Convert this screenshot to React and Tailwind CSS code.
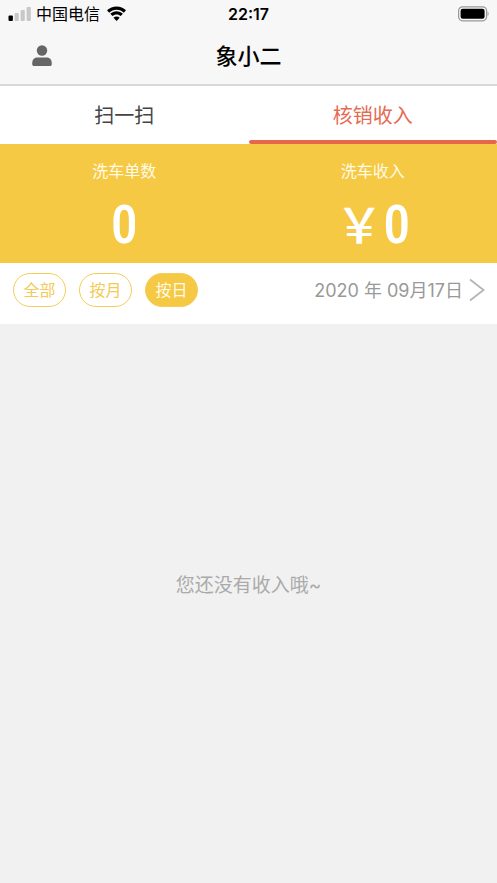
import React, { useState } from "react";
import clsx from "clsx";

const TABS = [
  { id: "scan", label: "扫一扫" },
  { id: "income", label: "核销收入" }
];

const STATS = [
  { label: "洗车单数", value: "0" },
  { label: "洗车收入", value: "0", currency: "￥" }
];

const RANGES = ["全部", "按月", "按日"];

function StatusBar() {
  return (
    <div className="grid h-7 grid-cols-3 items-center pl-2 pr-2 text-black">
      <div className="flex items-center gap-1">
        <svg className="h-4 w-6" viewBox="0 0 24 16" aria-hidden="true">
          <rect x="0.5" y="9.5" width="4.4" height="5.5" rx="1" fill="#000" />
          <rect x="6.6" y="7" width="4.2" height="8" rx="1" fill="#c8c8c8" />
          <rect x="12.6" y="4" width="4.2" height="11" rx="1" fill="#c8c8c8" />
          <rect x="18.6" y="1" width="4.2" height="14" rx="1" fill="#c8c8c8" />
        </svg>
        <span className="whitespace-nowrap text-base leading-7">中国电信</span>
        <svg className="ml-0.5 h-4 w-5 shrink-0" viewBox="0 0 20 16" aria-hidden="true">
          <path d="M10.6 0.5C7 0.5 3.6 1.9 1 4.3L3.2 6.7C5.2 4.8 7.8 3.8 10.6 3.8S16 4.8 17.8 6.7L20 4.3C17.6 1.9 14.2 0.5 10.6 0.5Z" />
          <path d="M10.6 5.3C8.2 5.3 6 6.2 4.3 7.7L6.5 10.1C7.6 9.1 9 8.5 10.6 8.5S13.6 9.1 14.7 10.1L16.9 7.7C15.2 6.2 13 5.3 10.6 5.3Z" />
          <path d="M10.6 15L7.5 11.7C9.3 10.1 11.9 10.1 13.7 11.7Z" />
        </svg>
      </div>
      <span className="text-center text-base font-semibold leading-7">22:17</span>
      <svg className="h-4 w-8 justify-self-end" viewBox="0 0 32 16" aria-hidden="true">
        <rect x="1.6" y="0.8" width="28" height="14" rx="4" fill="none" stroke="#999" strokeWidth="1.2" />
        <rect x="3.6" y="2.8" width="24" height="10" rx="2.2" fill="#000" />
        <path d="M30.6 5.5v4.6c1.4-.8 1.4-3.8 0-4.6z" fill="#999" />
      </svg>
    </div>
  );
}

function NavBar() {
  return (
    <div className="grid h-14 grid-cols-3 items-center">
      <button type="button" aria-label="个人中心" className="ml-8 w-5">
        <svg className="h-6 w-5" viewBox="0 0 20 24" fill="#666" aria-hidden="true">
          <circle cx="10" cy="6.5" r="5.2" />
          <path d="M0.2 19.4C0.2 15.6 2 13.4 5.2 13.4H14.8C18 13.4 19.8 15.6 19.8 19.4C19.8 21.2 19.2 22 17.6 22H2.4C0.8 22 0.2 21.2 0.2 19.4Z" />
        </svg>
      </button>
      <h1 className="text-center text-[22px] font-medium leading-8 text-black">象小二</h1>
    </div>
  );
}

export default function App() {
  const [tab, setTab] = useState("income");
  const [range, setRange] = useState("按日");

  return (
    <div className="flex min-h-screen flex-col bg-[#f1f1f1] font-['Inter','Noto_Sans_CJK_SC',sans-serif]">
      <header className="border-b-2 border-[#d8d8d8] bg-[#f7f7f7]">
        <StatusBar />
        <NavBar />
      </header>

      {/* Tabs */}
      <nav className="grid grid-cols-2 bg-white">
        {TABS.map((item) => (
          <button
            key={item.id}
            type="button"
            onClick={() => setTab(item.id)}
            className="flex h-[58px] flex-col text-xl"
          >
            <span
              className={clsx(
                "flex w-full flex-1 items-center justify-center pt-1.5",
                tab === item.id ? "text-[#e56a52]" : "text-[#444]"
              )}
            >
              {item.label}
            </span>
            <span className={clsx("h-1 w-full rounded-full", tab === item.id && "bg-[#e5664a]")} />
          </button>
        ))}
      </nav>

      {/* Totals */}
      <section className="grid h-[119px] grid-cols-2 bg-[#f5c944] text-white">
        {STATS.map((stat) => (
          <div key={stat.label} className="flex flex-col items-center pt-[15px]">
            <p className="text-base leading-6 text-[#fffbe8]">{stat.label}</p>
            <p className="mt-3 flex items-baseline">
              {stat.currency && (
                <span className="text-5xl font-medium leading-[60px]">{stat.currency}</span>
              )}
              <span className="text-[54px] font-medium leading-[60px] font-['Roboto_Condensed','Liberation_Sans_Narrow',sans-serif]">
                {stat.value}
              </span>
            </p>
          </div>
        ))}
      </section>

      {/* Date filter */}
      <section className="flex h-[61px] items-start justify-between bg-white pl-[13px] pr-3 pt-[10px]">
        <div className="flex gap-[13px]">
          {RANGES.map((item) => (
            <button
              key={item}
              type="button"
              onClick={() => setRange(item)}
              className={clsx(
                "h-[34px] w-[53px] rounded-full border border-[#f5cd5a] text-base",
                range === item ? "bg-[#f5c944] text-[#fffbe8]" : "bg-white text-[#f3ca55]"
              )}
            >
              {item}
            </button>
          ))}
        </div>
        <button type="button" className="flex h-[34px] items-center gap-1.5 text-[#999]">
          <span className="whitespace-nowrap pt-0.5 text-lg">2020 年 09月17日</span>
          <svg className="h-6 w-4" viewBox="0 0 16 24" fill="none" aria-hidden="true">
            <path d="M1 1.5L14.5 12L1 22.5" stroke="#b5b5b5" strokeWidth="1.8" />
          </svg>
        </button>
      </section>

      <main className="flex flex-1 items-center justify-center pb-9">
        <p className="text-[19px] leading-7 text-[#aaa]">您还没有收入哦~</p>
      </main>
    </div>
  );
}
